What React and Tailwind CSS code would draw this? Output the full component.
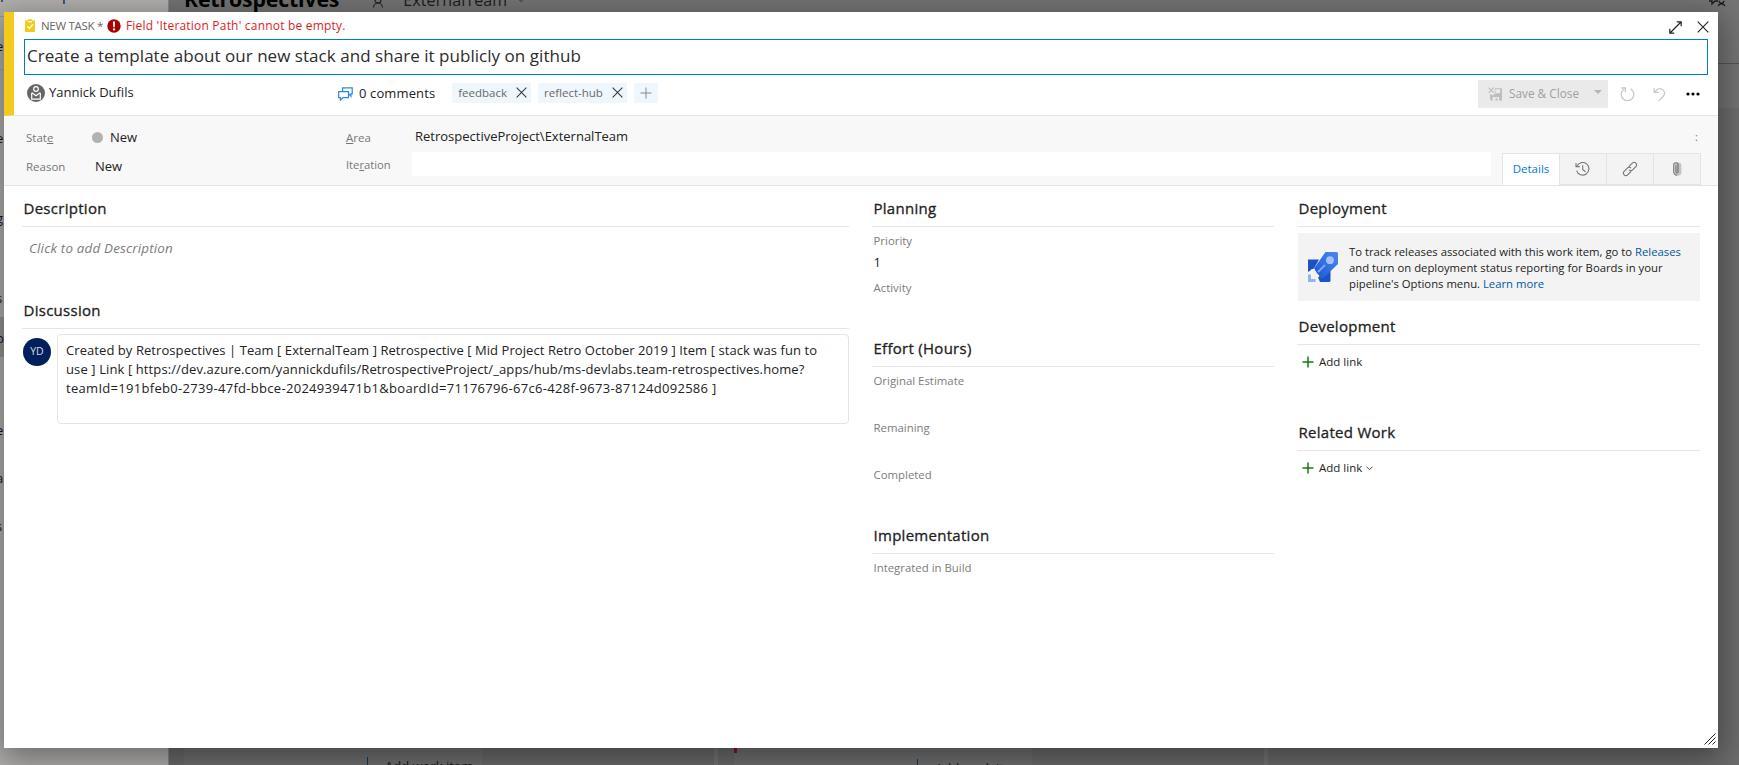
import React from 'react';

const NAV_MARKS = [
  { text: 'e', top: 'top-[36px]' },
  { text: 'e', top: 'top-[128px]' },
  { text: 'g', top: 'top-[208px]' },
  { text: 's', top: 'top-[288px]' },
  { text: 'p', top: 'top-[328px]' },
  { text: 'e', top: 'top-[420px]' },
  { text: 'a', top: 'top-[468px]' },
  { text: 's', top: 'top-[516px]' },
];

const CloseIcon = ({ size = 12, className = '' }) => (
  <svg width={size} height={size} viewBox="0 0 12 12" fill="none" stroke="currentColor" strokeWidth="1.1" className={className}>
    <path d="M.7.7l10.6 10.6M11.3.7L.7 11.3" />
  </svg>
);

const PlusIcon = ({ className = '' }) => (
  <svg width="12" height="12" viewBox="0 0 12 12" fill="none" stroke="currentColor" className={className}>
    <path d="M6 .5v11M.5 6h11" />
  </svg>
);

const TaskIcon = () => (
  <svg width="10" height="13" viewBox="0 0 10 13" className="shrink-0">
    <path fill="#f2cb1d" d="M0 1.5h2.6L3.2.3h3.6l.6 1.2H10V13H0z" />
    <path fill="none" stroke="#fff" strokeWidth="1.2" d="M3 2.6h4M2.3 7.3l2 2 3.6-3.8" />
  </svg>
);

const ErrorIcon = () => (
  <svg width="14" height="14" viewBox="0 0 14 14" className="shrink-0">
    <circle cx="7" cy="7" r="6.7" fill="#a80000" />
    <path fill="#fff" d="M5.9 2.5h2.2l-.4 5.7H6.3z" />
    <circle cx="7" cy="10.4" r="1.15" fill="#fff" />
  </svg>
);

const AvatarIcon = () => (
  <svg width="18" height="18" viewBox="0 0 18 18" className="shrink-0">
    <circle cx="9" cy="9" r="9" fill="#666" />
    <g fill="none" stroke="#fff" strokeWidth="1.2">
      <circle cx="9" cy="5" r="2.3" />
      <path d="M4.7 8.7v6.4h8.6V8.7" />
      <path d="M5 8.8l4 3 4-3" />
    </g>
  </svg>
);

const CommentsIcon = () => (
  <svg width="15" height="14" viewBox="0 0 15 14" fill="none" stroke="#2b88d8" strokeWidth="1.2" className="shrink-0">
    <path d="M4.6 4.6V.8h9.6v6h-1.3v2.5l-2-2.5" />
    <path d="M.7 4.7h9.8v5.9H5.2l-2.7 2.5v-2.5H.7z" />
  </svg>
);

const SaveCloseIcon = () => (
  <svg width="15" height="14" viewBox="0 0 15 14" className="shrink-0">
    <path fill="none" stroke="#bdbdbd" strokeWidth="1.2" d="M.6.6l5.2 5.2M5.8.6L.6 5.8" />
    <path fill="#bdbdbd" d="M6.8 1.2H14v12.4H3.4L2 12.3V7.2h1.2l1.4 1.2L6.8 7z" />
    <path fill="#eaeaea" d="M7.4 2.2h4.8v4H7.4zM4.6 10h6.6v3.6H9.4v-2.3H7.6v2.3h-3z" />
  </svg>
);

const RefreshIcon = () => (
  <svg width="15" height="15" viewBox="0 0 15 15" fill="none" stroke="#c8c8c8" strokeWidth="1.3">
    <path d="M10.6 1.9A6.3 6.3 0 1 1 4.2 2" />
    <path d="M1.2 1h4.2v4.2" />
  </svg>
);

const UndoIcon = () => (
  <svg width="13" height="15" viewBox="0 0 13 15" fill="none" stroke="#c8c8c8" strokeWidth="1.3">
    <path d="M1.2.7v4.6h4.6" />
    <path d="M1.4 5.1l2.1-2a4.6 4.6 0 0 1 6.8.2c1.7 2 1.6 4.4-.2 6.2l-4.6 4.6" />
  </svg>
);

const HistoryIcon = () => (
  <svg width="15" height="14" viewBox="0 0 15 14" fill="none" stroke="#777" strokeWidth="1.1">
    <path d="M1.8 4.4a6.3 6.3 0 1 1-.2 4.2" />
    <path d="M1 .9v3.7h3.8" />
    <path d="M7.7 3.3v4.1l2.8 2.5" />
  </svg>
);

const LinkIcon = () => (
  <svg width="16" height="16" viewBox="0 0 16 16" fill="none" stroke="#777" strokeWidth="1.1">
    <g transform="rotate(-45 8 8)">
      <path d="M7.2 10.5H2.2a2.5 2.5 0 0 1 0-5h4.6a2.5 2.5 0 0 1 2.5 2.5" />
      <path d="M8.8 5.5h5a2.5 2.5 0 0 1 0 5H9.2a2.5 2.5 0 0 1-2.5-2.5" />
    </g>
  </svg>
);

const AttachmentIcon = () => (
  <svg width="9" height="14" viewBox="0 0 9 14">
    <rect x="1.6" y=".6" width="6.8" height="12.8" rx="3.2" fill="#c4c4c4" />
    <path fill="none" stroke="#777" strokeWidth="1.1" d="M4.9 3v6.6M2.9 3.2v6.6a1.1 1.1 0 0 0 2.2 0V3a2.2 2.2 0 0 0-4.4 0v6.8a3.3 3.3 0 0 0 3.6 3.4" />
  </svg>
);

const RocketIcon = () => (
  <svg width="30" height="30" viewBox="0 0 30 30" className="shrink-0">
    <defs>
      <linearGradient id="rocketBody" x1="0" y1="1" x2="1" y2="0">
        <stop offset="0" stopColor="#1b57d6" />
        <stop offset="1" stopColor="#4f86ee" />
      </linearGradient>
    </defs>
    <path fill="#1d52c4" d="M0 7.5h11L6 16.5l-2.5 1.2L0 20zM22.5 18v11L21.5 30H12l-2-4.5z" />
    <path fill="url(#rocketBody)" d="M17.5 0H29l1 1v11L16 25.5l-3.5 1L6 16.5z" />
    <circle cx="22" cy="8.2" r="3.9" fill="#a4c2f8" />
    <path stroke="#7fa7f4" strokeWidth="1.8" d="M10 20l7-7" />
    <path fill="#f3f3f3" d="M3 17.5l3.3-1 1.4 5.4 3.6 1-2.6 4.4L3 26.3z" />
    <path fill="#8fb4f7" d="M0 22.5h3v4.5h4.5v3H0z" />
  </svg>
);

const Section = ({ title, className = '', children }) => (
  <section className={className}>
    <h2 className="h-[29px] border-b border-[#e6e6e6] pl-[1.5px] text-[15px] leading-5 tracking-[0.28px] text-[#222] [-webkit-text-stroke:0.3px]">{title}</h2>
    {children}
  </section>
);

const Field = ({ label, value }) => (
  <div className="h-[47px] pl-[1.5px]">
    <div className="text-[11.4px] leading-4 text-[#7c7c7c]">{label}</div>
    {value && <div className="mt-[5px] text-[13px] leading-4 text-[#222]">{value}</div>}
  </div>
);

const Tag = ({ name }) => (
  <span className="flex h-5 items-center gap-[9px] bg-[#eff6fc] pl-1.5 pr-1 text-[11.5px] text-[#6a6a6a]">
    {name}
    <CloseIcon size={11} className="text-[#333]" />
  </span>
);

/* Dimmed board page behind the dialog */
const Backdrop = () => (
  <div className="flex h-[765px] w-[1739px] overflow-hidden">
    <div className="relative h-full w-[169px] shrink-0 overflow-hidden border-r border-[#8a8a8a] bg-[#b3b2b0]">
      <div className="mt-4 h-px bg-[#999]" />
      <div className="mt-[52px] h-px bg-[#a5a5a5]" />
      <div className="mt-[247px] h-10 bg-[#989795]" />
      <span className="absolute -top-[15px] left-0 text-[15px] text-[#111a55]">r</span>
      <span className="absolute -top-[17px] left-[62px] text-[15px] text-[#111a55]">p</span>
      {NAV_MARKS.map(mark => (
        <span key={mark.top} className={`absolute -left-[4px] text-[13px] leading-5 text-[#111a35] ${mark.top}`}>{mark.text}</span>
      ))}
    </div>
    <div className="flex grow flex-col bg-[#707070]">
      <div className="flex h-[64px] items-start border-b border-[#555] bg-[#757575] pl-[15px] text-black">
        <span className="-mt-[15px] text-[21.3px] font-bold leading-7 tracking-[-0.15px]">Retrospectives</span>
        <svg width="12" height="14" viewBox="0 0 12 14" fill="none" stroke="#222" strokeWidth="1.2" className="-mt-[6px] ml-[33px]">
          <circle cx="6" cy="6" r="3" />
          <path d="M1.5 13.5a4.5 4.5 0 0 1 9 0" />
        </svg>
        <span className="-mt-[12px] ml-[19px] text-[16px] leading-6 tracking-[0.1px] text-[#1c1c1c]">ExternalTeam</span>
        <svg width="8" height="5" viewBox="0 0 8 5" fill="none" stroke="#333" className="-mt-[2px] ml-2.5"><path d="M1 .5l3 3 3-3" /></svg>
        <svg width="18" height="7" viewBox="0 0 18 7" fill="none" stroke="#1a1a1a" strokeWidth="1.3" className="ml-auto mr-[12px]">
          <path d="M0 1h3v3l3-3h3M9 6a4 4 0 0 1 7 0M12.5 3.2a2.4 2.4 0 0 0 2.4-2.4M12.5 3.2A2.4 2.4 0 0 1 10.1.8" />
        </svg>
      </div>
      <div className="h-[44px] bg-[#747474]" />
      <div className="flex grow items-end bg-[#6d6d6d] pl-[15px]">
        <div className="flex h-[20px] w-[298px] items-start bg-[#727272] pl-[183px] text-[13px] leading-5 text-[#161616]">
          <span className="mr-[17px] mt-3 h-4 w-px bg-[#1b3a5c]" />
          <span className="mt-[11px]">Add work item</span>
        </div>
        <div className="ml-[232px] h-5 w-1 bg-[#777]" />
        <div className="ml-4 flex h-5 w-[298px] items-start bg-[#727272] text-[13px] leading-5 text-[#161616]">
          <span className="h-[8px] w-[3px] bg-[#8c1420]" />
          <span className="ml-[180px] mr-[17px] mt-3.5 h-4 w-px bg-[#1b3a5c]" />
          <span className="mt-[13px]">Add work item</span>
        </div>
        <div className="ml-[232px] h-5 w-1 bg-[#777]" />
      </div>
    </div>
  </div>
);

const DialogHeader = () => (
  <header className="h-[104px] border-b border-l-10 border-b-[#e4e4e4] border-l-[#f2cb1d] pl-2.5 pr-2.5">
    <div className="flex h-[27px] items-center pl-[1px] text-[12px]">
      <TaskIcon />
      <span className="ml-1.5 text-[11.5px] tracking-[-0.3px] text-[#666]">NEW TASK *</span>
      <span className="ml-1"><ErrorIcon /></span>
      <span className="ml-[5px] tracking-[0.2px] text-[#dd1c1c]">Field 'Iteration Path' cannot be empty.</span>
      <span className="-mr-[1px] ml-auto flex items-center gap-[15px] pt-[3px] text-[#222]">
        <svg width="13" height="13" viewBox="0 0 13 13" fill="none" stroke="currentColor" strokeWidth="1.2">
          <path d="M1 12L12 1M7.8.8h4.4v4.4M.8 7.8v4.4h4.4" />
        </svg>
        <CloseIcon />
      </span>
    </div>
    <div className="flex h-9 items-center border border-[#0078d4] pb-0.5 pl-[2px] text-[17px] tracking-[0.04px] text-[#2c2c2c]">
      Create a template about our new stack and share it publicly on github
    </div>
    <div className="flex h-[38px] items-center text-[13px] text-[#222]">
      <div className="flex w-[314px] items-center gap-1 pb-[3px] pl-[3px]">
        <AvatarIcon />
        Yannick Dufils
      </div>
      <div className="flex items-center gap-[6px]">
        <CommentsIcon />
        <span className="tracking-[0.12px]">0 comments</span>
      </div>
      <div className="ml-[17px] flex items-center gap-[7px] pb-[3px]">
        <Tag name="feedback" />
        <Tag name="reflect-hub" />
        <span className="flex h-5 w-6 items-center justify-center bg-[#eff6fc] text-[#8a8a8a]"><PlusIcon /></span>
      </div>
      <div className="-mr-[1px] ml-auto flex items-center">
        <div className="flex h-7 w-[130px] items-center bg-[#eaeaea] pl-2.5 text-[11.8px] text-[#a0a0a0]">
          <SaveCloseIcon />
          <span className="ml-[6px] whitespace-nowrap">Save &amp; Close</span>
          <svg width="8" height="4" viewBox="0 0 8 4" className="-mt-1 ml-auto mr-[6px]"><path fill="#b5b5b5" d="M0 0h8L4 4z" /></svg>
        </div>
        <span className="ml-3"><RefreshIcon /></span>
        <span className="ml-[18px]"><UndoIcon /></span>
        <svg width="14" height="4" viewBox="0 0 14 4" fill="#000" className="ml-5 mr-[9px]">
          <circle cx="2" cy="2" r="1.6" /><circle cx="7" cy="2" r="1.6" /><circle cx="12" cy="2" r="1.6" />
        </svg>
      </div>
    </div>
  </header>
);

const StatusBar = () => (
  <div className="flex h-[70px] border-b border-[#e4e4e4] bg-[#f8f8f8] pl-[22px] text-[13px] text-[#222]">
    <div className="w-[320px] pt-[11px]">
      <div className="flex h-5 items-center">
        <span className="w-[66px] pt-[1px] text-[11.5px] text-[#777]">Stat<u>e</u></span>
        <span className="h-[11px] w-[11px] rounded-full bg-[#b2b2b2]" />
        <span className="ml-[7px] pt-[1px]">New</span>
      </div>
      <div className="mt-[10px] flex h-5 items-center">
        <span className="w-[69px] text-[11.5px] text-[#777]">Reason</span>
        <span>New</span>
      </div>
    </div>
    <div className="w-[1145px] pt-[11px]">
      <div className="flex h-5 items-center">
        <span className="w-[69px] pt-[2px] text-[11.5px] text-[#777]"><u>A</u>rea</span>
        <span>RetrospectiveProject\ExternalTeam</span>
      </div>
      <div className="mt-[5px] flex h-6 items-center">
        <span className="w-[66px] pt-[2px] text-[11.2px] text-[#777]">Ite<u>r</u>ation</span>
        <span className="h-6 w-[1079px] bg-white" />
      </div>
    </div>
    <div className="ml-[11px] flex w-[200px] flex-col">
      <div className="flex h-[37px] items-center justify-end pr-[4px] pt-[5px] text-[11px] text-[#777]">:</div>
      <div className="flex h-[33px] text-[#777]">
        <span className="flex w-[57px] items-center justify-center border-l border-t border-[#e4e4e4] bg-white pb-[2px] text-[11.5px] text-[#0078d4]">Details</span>
        <span className="flex w-[48px] items-center justify-center border-x border-t border-b border-[#e4e4e4] bg-[#f3f3f3] pr-[2px]"><HistoryIcon /></span>
        <span className="flex w-[47px] items-center justify-center border-r border-t border-b border-[#e4e4e4] bg-[#f3f3f3]"><LinkIcon /></span>
        <span className="flex w-[47px] items-center justify-center border-r border-t border-b border-[#e4e4e4] bg-[#f3f3f3]"><AttachmentIcon /></span>
      </div>
    </div>
  </div>
);

const AddLink = ({ dropdown }) => (
  <div className="flex items-center pl-[5px] pt-2 text-[11.5px] leading-[18px] text-[#222]">
    <PlusIcon className="text-[#107c10] [stroke-width:1.5]" />
    <span className="ml-[5px]">Add link</span>
    {dropdown && (
      <svg width="7" height="5" viewBox="0 0 7 5" fill="none" stroke="#444" className="ml-[4px]"><path d="M.5.7l3 3 3-3" /></svg>
    )}
  </div>
);

const App = () => {
  return (
    <div className="relative h-[765px] w-[1739px] overflow-hidden font-['Open_Sans','Noto_Sans',sans-serif]">
      <Backdrop />
      <div className="absolute left-1 top-3 h-[736px] w-[1714px] bg-white shadow-[0_8px_30px_4px_rgba(0,0,0,0.4)]">
        <DialogHeader />
        <StatusBar />
        <main className="flex gap-[23px] pl-[18px] pt-3">
          <div className="w-[827px]">
            <Section title="Description" className="h-[102px]">
              <p className="pl-[7px] pt-[11px] text-[13.4px] italic leading-5 tracking-[0.18px] text-[#7c7c7c]">Click to add Description</p>
            </Section>
            <Section title="Discussion">
              <div className="flex gap-1.5 pl-[1px] pt-[5px]">
                <span className="mt-1 flex h-7 w-7 shrink-0 items-center justify-center rounded-full bg-[#00205b] text-[10.5px] text-[#d5dbe6]">YD</span>
                <div className="h-[90px] w-[792px] rounded border border-[#e4e4e4] pl-2 pt-1.5 text-[13px] leading-[19px] text-[#222]">
                  <p className="tracking-[0.07px]">Created by Retrospectives | Team [ ExternalTeam ] Retrospective [ Mid Project Retro October 2019 ] Item [ stack was fun to</p>
                  <p className="tracking-[0.11px]">use ] Link [ https://dev.azure.com/yannickdufils/RetrospectiveProject/_apps/hub/ms-devlabs.team-retrospectives.home?</p>
                  <p className="tracking-[0.3px]">teamId=191bfeb0-2739-47fd-bbce-2024939471b1&amp;boardId=71176796-67c6-428f-9673-87124d092586 ]</p>
                </div>
              </div>
            </Section>
          </div>

          <div className="w-[402px]">
            <Section title="Planning" className="h-[140px]">
              <div className="pt-1.5">
                <Field label="Priority" value="1" />
                <Field label="Activity" />
              </div>
            </Section>
            <Section title="Effort (Hours)" className="h-[187px]">
              <div className="pt-1.5">
                <Field label="Original Estimate" />
                <Field label="Remaining" />
                <Field label="Completed" />
              </div>
            </Section>
            <Section title="Implementation">
              <div className="pt-1.5">
                <Field label="Integrated in Build" />
              </div>
            </Section>
          </div>

          <div className="w-[403px]">
            <Section title="Deployment" className="h-[118px]">
              <div className="ml-[1px] mt-1.5 flex h-[68px] items-center gap-[11px] bg-[#f3f3f3] pl-2.5">
                <RocketIcon />
                <p className="whitespace-nowrap pt-[2px] text-[11.3px] leading-4 text-[#222]">
                  To track releases associated with this work item, go to <span className="text-[#005a9e]">Releases</span><br />
                  and turn on deployment status reporting for Boards in your<br />
                  pipeline's Options menu. <span className="text-[#005a9e]">Learn more</span>
                </p>
              </div>
            </Section>
            <Section title="Development" className="h-[106px]">
              <AddLink />
            </Section>
            <Section title="Related Work">
              <AddLink dropdown />
            </Section>
          </div>
        </main>
        <svg width="12" height="12" viewBox="0 0 12 12" fill="none" stroke="#222" className="absolute bottom-[3px] right-[2px]">
          <path d="M.5 11.5l11-11M4.5 11.5l7-7M8.5 11.5l3-3" />
        </svg>
      </div>
    </div>
  );
};

export default App;
